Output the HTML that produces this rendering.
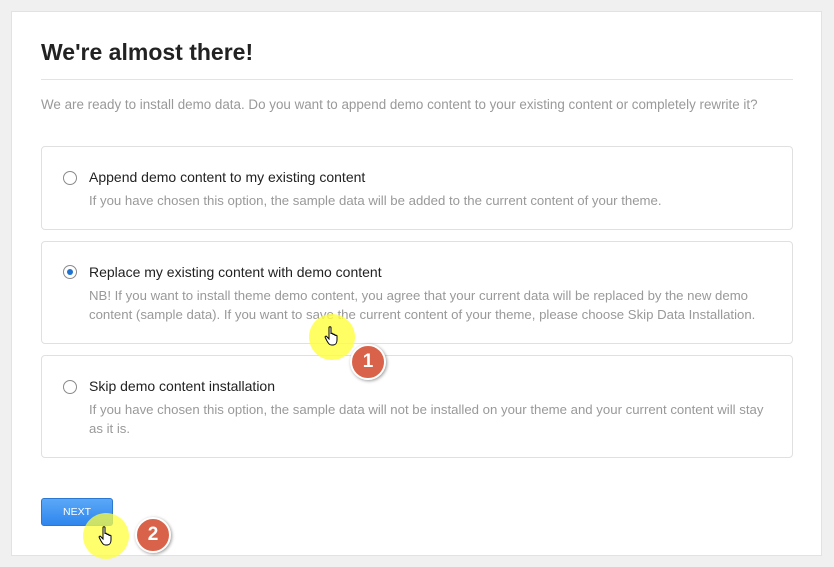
<!DOCTYPE html><html><head><style>
body{margin:0;width:834px;height:567px;background:#f0f0f0;font-family:"Liberation Sans",sans-serif;position:relative;overflow:hidden}
.p{position:absolute;left:11px;top:11px;width:811px;height:545px;background:#fff;border:1px solid #e2e2e2;box-sizing:border-box}
h1{position:absolute;left:41px;top:39px;margin:0;font-size:23px;font-weight:bold;color:#222}
.hr{position:absolute;left:41px;top:79px;width:752px;height:1px;background:#e3e3e3}
.intro{position:absolute;left:41px;top:97px;font-size:13.4px;color:#999;white-space:nowrap}
.box{position:absolute;left:41px;width:752px;border:1px solid #e0e0e0;border-radius:4px;box-sizing:border-box}
.r{position:absolute;left:21px;width:14px;height:14px;border:1px solid #8a8a8a;border-radius:50%;box-sizing:border-box;background:#fff}
.t{position:absolute;left:47px;font-size:14px;color:#222;white-space:nowrap}
.d{position:absolute;left:47px;font-size:13.2px;color:#999;line-height:19px;width:675px}
.btn{position:absolute;left:41px;top:498px;width:72px;height:28px;border-radius:3px;background:linear-gradient(#5aa8f8,#2f86ec);border:1px solid #2b78d0;box-sizing:border-box;color:#fff;font-size:10.5px;text-align:center;line-height:27px}
.hl{position:absolute;width:46px;height:46px;border-radius:50%;background:rgba(255,255,60,.8)}
.bd{position:absolute;width:32px;height:32px;border-radius:50%;background:#d9634a;border:2px solid #fff;box-shadow:1px 1px 3px rgba(0,0,0,.4);color:#fff;font-weight:bold;font-size:19px;text-align:center;line-height:32px}
.hand{position:absolute;width:16px;height:20px}
</style></head><body>
<div class="p"></div>
<h1>We're almost there!</h1>
<div class="hr"></div>
<div class="intro">We are ready to install demo data. Do you want to append demo content to your existing content or completely rewrite it?</div>
<div class="box" style="top:146px;height:84px"><div class="r" style="top:24px"></div><div class="t" style="top:22px">Append demo content to my existing content</div><div class="d" style="top:44px">If you have chosen this option, the sample data will be added to the current content of your theme.</div></div>
<div class="box" style="top:241px;height:103px"><div class="r" style="top:23px"><div style="position:absolute;left:3px;top:3px;width:6px;height:6px;border-radius:50%;background:#1e73d0"></div></div><div class="t" style="top:22px">Replace my existing content with demo content</div><div class="d" style="top:44px">NB! If you want to install theme demo content, you agree that your current data will be replaced by the new demo content (sample data). If you want to save the current content of your theme, please choose Skip Data Installation.</div></div>
<div class="box" style="top:355px;height:103px"><div class="r" style="top:24px"></div><div class="t" style="top:22px">Skip demo content installation</div><div class="d" style="top:44px">If you have chosen this option, the sample data will not be installed on your theme and your current content will stay as it is.</div></div>
<div class="btn">NEXT</div>
<div class="hl" style="left:309px;top:314px"></div>
<svg class="hand" style="left:324px;top:326px" viewBox="0 0 16 20"><path d="M5 1.5c0-1 2-1 2 0V8c0-1 2-1 2 0v1c0-1 2-1 2 0v1c0-1 2-1 2 0v4c0 3-1.5 5-4 5H7.5C5.5 19 4.5 17.5 3 15L1.2 11.5c-.5-1 .8-1.8 1.5-1L5 13z" fill="#fff" stroke="#000" stroke-width="1"/></svg>
<div class="bd" style="left:350px;top:344px">1</div>
<div class="hl" style="left:83px;top:513px;background:rgba(255,255,60,.75)"></div>
<svg class="hand" style="left:98px;top:526px" viewBox="0 0 16 20"><path d="M5 1.5c0-1 2-1 2 0V8c0-1 2-1 2 0v1c0-1 2-1 2 0v1c0-1 2-1 2 0v4c0 3-1.5 5-4 5H7.5C5.5 19 4.5 17.5 3 15L1.2 11.5c-.5-1 .8-1.8 1.5-1L5 13z" fill="#fff" stroke="#000" stroke-width="1"/></svg>
<div class="bd" style="left:135px;top:517px">2</div>
</body></html>
